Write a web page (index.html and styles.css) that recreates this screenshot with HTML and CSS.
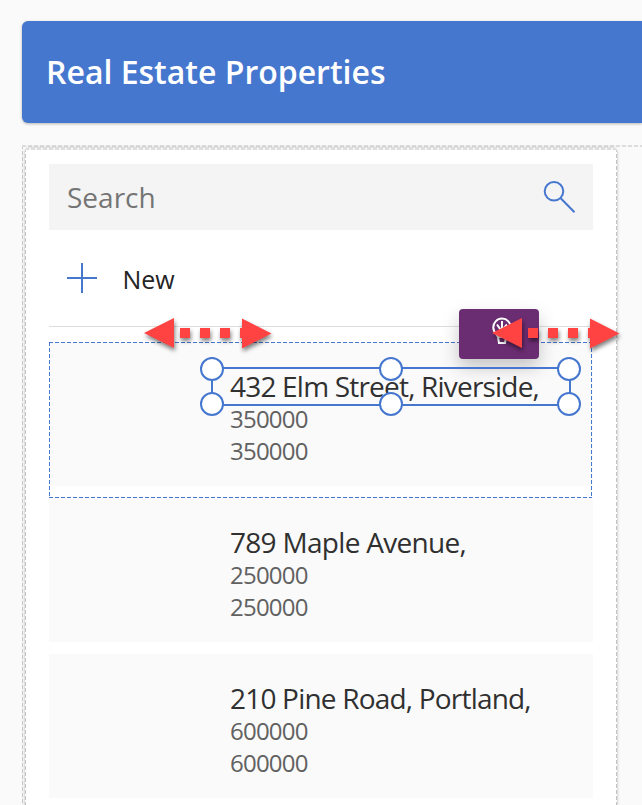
FILE: index.html
```html
<!DOCTYPE html>
<html lang="en">
<head>
<meta charset="utf-8">
<title>Real Estate Properties</title>
<link rel="stylesheet" href="styles.css">
</head>
<body>
<header class="header"><h1>Real Estate Properties</h1></header>
<main class="container">
  <section class="card">
    <div class="search">
      <span class="search-label">Search</span>
      <svg class="search-icon" width="34" height="34" viewBox="0 0 34 34"><circle cx="12" cy="11.300" r="9.300"/><path d="M18.700 18.200L32.500 32.200"/></svg>
    </div>
    <div class="new">
      <svg class="plus" width="30" height="30" viewBox="0 0 30 30"><path d="M15 0V30M0 15H30"/></svg>
      <span class="new-label">New</span>
    </div>
    <div class="list">
      <article class="item selected">
        <h2><span class="t1">432 Elm Street, Riverside,</span></h2><p>350000</p><p>350000</p>
        <div class="row-outline"></div>
        <div class="ai"><svg width="24" height="30" viewBox="0 0 24 30"><path d="M8 20L6.500 17A8.700 8.700 0 1 1 17.500 17L16 20ZM8 20L9 26H15L16 20M12 4V14M7 7.500L11.500 14L17 7.500"/></svg></div>
        <div class="selection">
          <i class="h nw"></i><i class="h n"></i><i class="h ne"></i>
          <i class="h sw"></i><i class="h s"></i><i class="h se"></i>
        </div>
        <svg class="arrow arrow-left" width="128" height="34" viewBox="0 0 128 34"><path d="M0 15L30 0V30ZM36 10H46V20H36ZM56 10H66V20H56ZM76 10H86V20H76ZM96 10H98V.5L127.500 15.500L98 30.500V20H96Z"/></svg>
        <svg class="arrow arrow-right" width="128" height="34" viewBox="0 0 128 34"><path d="M0 15L30 0V30ZM36 10H46V20H36ZM56 10H66V20H56ZM76 10H86V20H76ZM96 10H98V.5L127.500 15.500L98 30.500V20H96Z"/></svg>
      </article>
      <article class="item"><h2><span class="t2">789 Maple Avenue,</span></h2><p>250000</p><p>250000</p></article>
      <article class="item"><h2><span class="t3">210 Pine Road, Portland,</span></h2><p>600000</p><p>600000</p></article>
    </div>
  </section>
</main>
</body>
</html>
```
FILE: styles.css
```css
* { box-sizing: border-box; }
html { overflow: hidden; }
body { margin: 0; height: 805px; overflow: hidden; padding: 21px 0 0 22px; background: #fafafa; font-family: "Open Sans", "Noto Sans", sans-serif; color: #242424; }
h1, h2, p { margin: 0; font-weight: 400; }
.header { height: 102px; padding-left: 24px; display: flex; align-items: center; background: #4677cf; border-radius: 6px 0 0 6px; box-shadow: 0 1px 3px rgba(0,0,0,.28); }
.header h1 { color: #fff; font-size: 32px; font-weight: 600; line-height: 44px; }
.container {
  margin-top: 22px; height: 662px; overflow: hidden; padding: 3px 0 0 3px;
  background:
    repeating-linear-gradient(90deg, #ddd 0 4px, #f6f6f6 4px 6px) 0 0 / 100% 2px no-repeat,
    repeating-linear-gradient(180deg, #c8c8c8 0 4px, #f4f4f4 4px 6px) 0 0 / 1px 100% no-repeat;
}
.card {
  width: 592px; height: 659px; border-radius: 5px 5px 0 0; box-shadow: 0 0 3px rgba(0,0,0,.3); padding: 16px 24px 0;
  background:
    repeating-linear-gradient(90deg, #ddd 0 4px, #f8f8f8 4px 6px) 0 0 / 100% 2px no-repeat,
    repeating-linear-gradient(180deg, #c4c4c4 0 4px, #fff 4px 6px) 0 0 / 1px 100% no-repeat,
    repeating-linear-gradient(180deg, #c4c4c4 0 4px, #fff 4px 6px) 100% 0 / 1px 100% no-repeat,
    #fff;
}
.search { height: 66px; background: #f4f4f4; padding: 0 17px 0 18px; display: flex; align-items: center; justify-content: space-between; }
.search-label { font-size: 28px; color: #757575; line-height: 40px; }
.search-icon, .plus { fill: none; stroke: #4677cf; stroke-width: 2; }
.new { height: 97px; padding: 0 18px; display: flex; align-items: center; gap: 25.5px; border-bottom: 1px solid #dedede; }
.new-label { font-size: 25px; line-height: 36px; padding-top: 2px; }
.list { margin-top: 15px; display: flex; flex-direction: column; gap: 12px; }
.item { position: relative; height: 144px; flex: none; padding: 26px 0 0 181px; background: #fafafa; }
.item h2 { font-size: 28px; line-height: 36px; height: 35px; white-space: nowrap; color: #303030; letter-spacing: -.8px; }
.item p { font-size: 24px; line-height: 32px; letter-spacing: -.77px; color: #616161; }
.item .t2 { letter-spacing: -.7px; }
.row-outline {
  position: absolute; inset: 0 1px -12px 0;
  background:
    repeating-linear-gradient(90deg, #4677cf 0 4px, transparent 4px 6px) 0 0 / 100% 1px no-repeat,
    repeating-linear-gradient(90deg, #4677cf 0 4px, transparent 4px 6px) 0 100% / 100% 1px no-repeat,
    repeating-linear-gradient(180deg, #4677cf 0 4px, transparent 4px 6px) 0 0 / 1px 100% no-repeat,
    repeating-linear-gradient(180deg, #4677cf 0 4px, transparent 4px 6px) 100% 0 / 1px 100% no-repeat;
}
.ai { position: absolute; left: 410px; top: -33px; width: 80px; height: 50px; border-radius: 4px; background: #6b2d72; box-shadow: 0 8px 18px rgba(0,0,0,.22); }
.ai svg { position: absolute; left: 31px; top: 8px; fill: none; stroke: #fff; stroke-width: 2; }
.selection { position: absolute; left: 162px; top: 25px; width: 360px; height: 39px; border: 2px solid #4677cf; }
.h { position: absolute; width: 24px; height: 24px; border: 2px solid #4677cf; border-radius: 50%; background: #fff; }
.nw, .n, .ne { top: -12px; }
.sw, .s, .se { top: 23px; }
.nw, .sw { left: -13px; }
.n, .s { left: 166px; }
.ne, .se { left: 344px; }
.arrow { position: absolute; top: -24px; fill: #ff4343; overflow: visible; filter: drop-shadow(1px 3px 2px rgba(0,0,0,.5)); }
.arrow-left { left: 95px; }
.arrow-right { left: 443px; }
```
